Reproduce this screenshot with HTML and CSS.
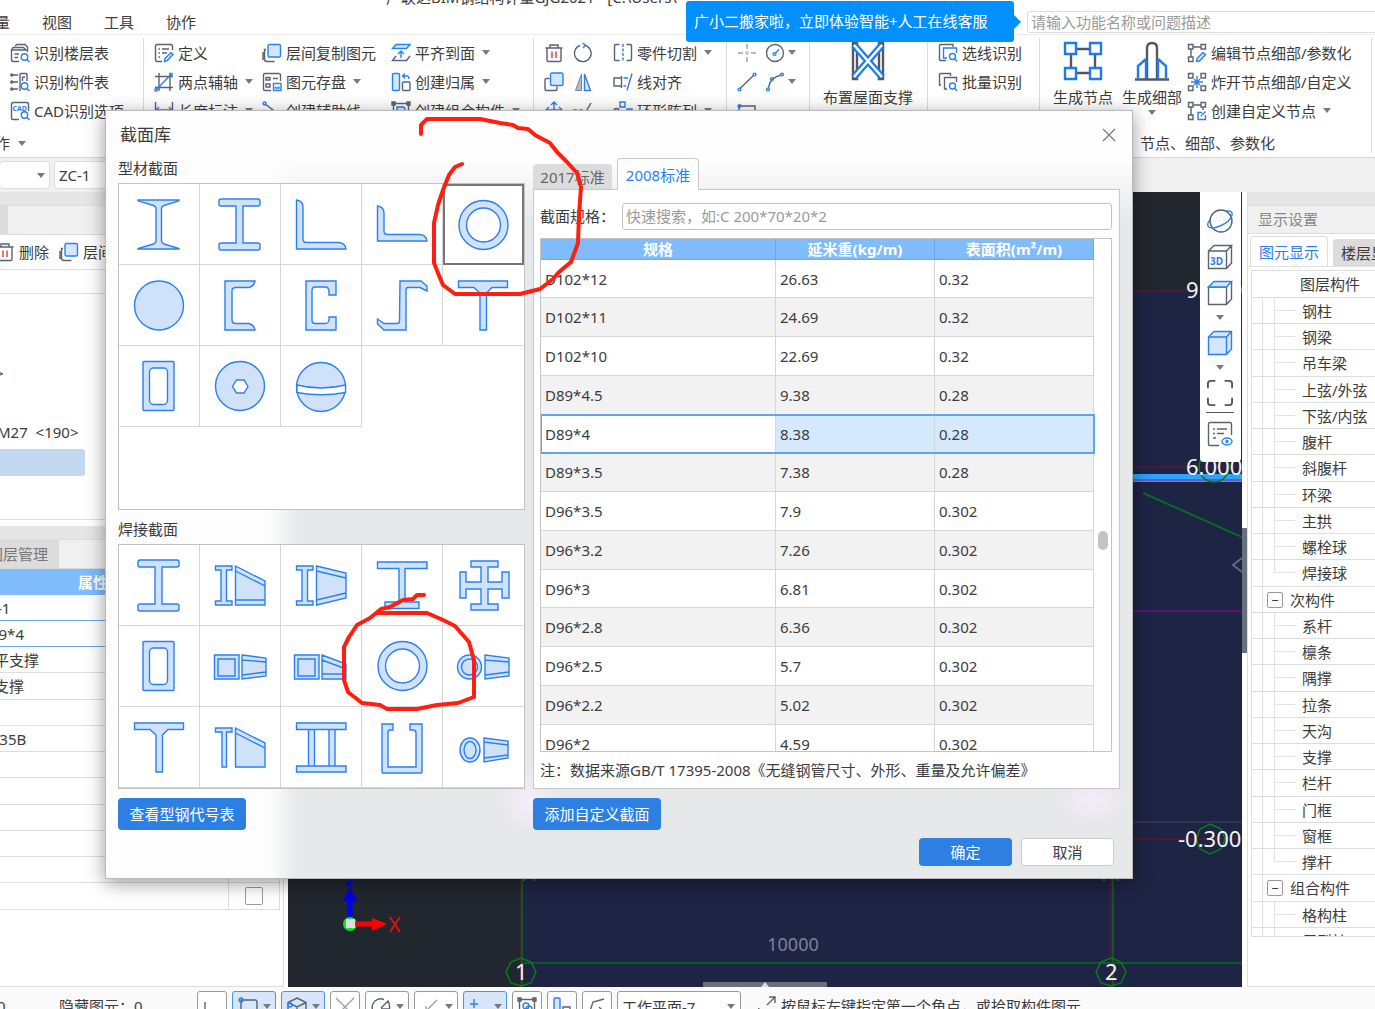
FILE: index.html
```html
<!DOCTYPE html>
<html lang="zh-CN">
<head>
<meta charset="utf-8">
<title>广联达BIM钢结构计量GJG2021</title>
<link rel="stylesheet" href="styles.css">
</head>
<body>
<svg class="defs" aria-hidden="true">
  <symbol id="s-h" viewBox="0 0 80 80"><path d="M21 15H58Q60 15 60 17V20Q60 22 58 22H43V59H58Q60 59 60 61V64Q60 66 58 66H21Q19 66 19 64V61Q19 59 21 59H36V22H21Q19 22 19 20V17Q19 15 21 15Z"/></symbol>
  <symbol id="s-ring" viewBox="0 0 80 80"><circle cx="40.500" cy="40" r="24.500"/><circle class="hole" cx="40.500" cy="40" r="17"/></symbol>
  <symbol id="s-box" viewBox="0 0 80 80"><rect x="24" y="15.500" width="31" height="49" rx="1"/><rect class="hole" x="30.500" y="22" width="18" height="36.500" rx="4"/></symbol>
  <symbol id="s-t" viewBox="0 0 80 80"><path d="M15.500 16H64.500V22.500H49L43.500 28V65H37V28L31 22.500H15.500Z"/></symbol>
  <symbol id="i-copy" viewBox="0 0 20 20"><path class="g" d="M4 6.500H2.500V16Q2.500 18.500 5 18.500H12.500M1 9V17"/><rect class="bf" x="6" y="1.500" width="12.500" height="12.500" rx="1.500"/></symbol>
  <symbol id="i-trash" viewBox="0 0 20 20"><path class="g" d="M1.500 5H18.500M6 5V2H14V5M3 5V17Q3 18.500 4.500 18.500H15.500Q17 18.500 17 17V5"/><path class="r" d="M8 8.500V15M12 8.500V15"/></symbol>
</svg>
<div class="app">
  <header class="titlebar"><span>广联达BIM钢结构计量GJG2021 - [C:\Users\</span></header>
  <nav class="menubar">
    <a href="#">工程量</a><a href="#">视图</a><a href="#">工具</a><a href="#">协作</a>
    <input class="help-search" type="text" aria-label="搜索功能" placeholder="请输入功能名称或问题描述">
    <div class="promo">广小二搬家啦，立即体验智能+人工在线客服</div>
  </nav>

  <section class="ribbon">
    <div class="group g-cad">
      <div class="col">
        <button class="cmd"><svg class="ic" viewBox="0 0 20 20"><path class="g" d="M5 3L7 1.500H15L17.500 4V9M1.500 7L3 4.500H13.500L16 7H1.500V17Q1.500 18.500 3 18.500H9M4.500 11H9M4.500 14.500H8"/><circle class="b" cx="14.500" cy="14" r="3.200"/><path class="b" d="M17 16.500L19.500 19"/></svg>识别楼层表</button>
        <button class="cmd"><svg class="ic" viewBox="0 0 20 20"><path class="g" d="M3 3H8M3 10H8M3 17H8M10 19V2.500Q10 1.500 11 1.500H16Q17 1.500 17 2.500V9M12.500 5H15M12.500 5V9"/><circle class="g" cx="1.800" cy="3" r="1"/><circle class="g" cx="1.800" cy="10" r="1"/><circle class="g" cx="1.800" cy="17" r="1"/><circle class="b" cx="14.500" cy="14" r="3.200"/><path class="b" d="M17 16.500L19.500 19"/></svg>识别构件表</button>
        <button class="cmd"><svg class="ic" viewBox="0 0 20 20"><path class="g" d="M18.500 10V3Q18.500 1.500 17 1.500H3Q1.500 1.500 1.500 3V17Q1.500 18.500 3 18.500H9"/><text class="cadtext" x="2.500" y="9.500">CAD</text><circle class="b" cx="14.500" cy="14" r="3.200"/><path class="b" d="M17 16.500L19.500 19"/></svg>CAD识别选项</button>
      </div>
      <button class="caption cut">操作<i class="caret"></i></button>
    </div>
    <div class="group g-draw">
      <div class="col c1">
        <button class="cmd"><svg class="ic" viewBox="0 0 20 20"><path class="g" d="M18.500 7V3Q18.500 1.500 17 1.500H3Q1.500 1.500 1.500 3V17Q1.500 18.500 3 18.500H8M4.500 6H6M8 6H15M4.500 10H6M8 10H13M4.500 14H6"/><path class="bf" d="M10.500 18.500L11 15.500L17 9.500L19 11.500L13.500 17.500Z"/></svg>定义</button>
        <button class="cmd"><svg class="ic" viewBox="0 0 20 20"><path class="g" d="M1 4.500H19M1 15.500H19M5 1V19M16 1V19"/><path class="b" d="M2.500 17.500L16.500 3"/><circle class="b" cx="2" cy="18" r="1.200"/><circle class="b" cx="17" cy="2.500" r="1.200"/></svg>两点辅轴<i class="caret"></i></button>
        <button class="cmd"><svg class="ic" viewBox="0 0 20 20"><path class="g" d="M1.500 1V19M18.500 1V19"/><path class="b" d="M2 9H18M5 6L2 9L5 12M15 6L18 9L15 12"/></svg>长度标注<i class="caret"></i></button>
      </div>
      <div class="col c2">
        <button class="cmd"><svg class="ic"><use href="#i-copy"/></svg>层间复制图元</button>
        <button class="cmd"><svg class="ic" viewBox="0 0 20 20"><path class="g" d="M18.500 9V3Q18.500 1.500 17 1.500H3Q1.500 1.500 1.500 3V17Q1.500 18.500 3 18.500H9M4 5.500H8V8H4ZM11 6.500H16M4 12H8V15H4Z"/><path class="b" d="M11.500 11.500H19V18.500H11.500ZM13.500 14.500V16H17V14.500"/></svg>图元存盘<i class="caret"></i></button>
        <button class="cmd"><svg class="ic" viewBox="0 0 20 20"><path class="g" d="M3 3L11 9L14 16"/><circle class="b" cx="2.500" cy="2.500" r="1.500"/></svg>创建辅助线</button>
      </div>
      <div class="col">
        <button class="cmd"><svg class="ic" viewBox="0 0 20 20"><path class="bf" d="M5 1.500H19L15.500 5.500H1.500Z"/><path class="b" d="M10 15V8.500M7 11L10 8L13 11"/><path class="g" d="M5 13L1.500 17.500H15.500L19 13"/></svg>平齐到面<i class="caret"></i></button>
        <button class="cmd"><svg class="ic" viewBox="0 0 20 20"><rect class="bf" x="1.500" y="1.500" width="7" height="17" rx="1"/><rect class="g" x="11.500" y="10" width="7.500" height="8.500" rx="1"/><path class="b" d="M12 4H16Q18 4 18 7M14 1.500L11.500 4L14 6.500"/></svg>创建归属<i class="caret"></i></button>
        <button class="cmd"><svg class="ic" viewBox="0 0 20 20"><path class="g" d="M2.500 2.500H17.500V17.500H2.500ZM1 1H4V4H1ZM16 1H19V4H16Z"/><path class="bf" d="M6 14V6H12Q14 6 14 9V14Z"/></svg>创建组合构件<i class="caret"></i></button>
      </div>
    </div>
    <div class="group g-edit">
      <div class="col icons">
        <button class="cmd" aria-label="删除"><svg class="ic"><use href="#i-trash"/></svg></button>
        <button class="cmd" aria-label="复制"><svg class="ic" viewBox="0 0 20 20"><path class="g" d="M5.500 6.500H2.500Q1 6.500 1 8V17Q1 18.500 2.500 18.500H11.500Q13 18.500 13 17V14.500"/><rect class="bf" x="6.500" y="1" width="12.500" height="12.500" rx="1.500"/></svg></button>
        <button class="cmd" aria-label="移动"><svg class="ic" viewBox="0 0 20 20"><path class="b" d="M10 1V12M7 4L10 1L13 4M5 6L2 9L5 12M15 6L18 9L15 12M2 9H18"/></svg></button>
      </div>
      <div class="col icons">
        <button class="cmd" aria-label="旋转"><svg class="ic" viewBox="0 0 20 20"><path class="g" d="M11.500 2.200A8.300 8.300 0 1 1 7 2.500"/><path class="b" d="M9.500 0L12.500 2.200L10 5"/></svg></button>
        <button class="cmd" aria-label="镜像"><svg class="ic" viewBox="0 0 20 20"><path class="gf" d="M8.500 2V18.500H2.500Z"/><path class="bf" d="M11.500 2V18.500H17.500Z"/></svg></button>
        <button class="cmd tight" aria-label="修剪"><svg class="ic" viewBox="0 0 20 20"><path class="b" stroke-dasharray="4 2" d="M0 9H10"/><path class="g" d="M18 2L12 12"/></svg></button>
      </div>
      <div class="col c3">
        <button class="cmd"><svg class="ic" viewBox="0 0 20 20"><path class="g" d="M6.500 1.500H2.500Q1.500 1.500 1.500 2.500V16.500Q1.500 17.500 2.500 17.500H6.500M13.500 1.500H17.500Q18.500 1.500 18.500 2.500V16.500Q18.500 17.500 17.500 17.500H13.500"/><path class="b" stroke-dasharray="3 1.500" d="M10 1V19"/></svg>零件切割<i class="caret"></i></button>
        <button class="cmd"><svg class="ic" viewBox="0 0 20 20"><path class="g" d="M8.500 6H1V14H8.500ZM8.500 4V16"/><path class="b" d="M19 1.500L14 18.500M10.500 6H15M10.500 14H13"/></svg>线对齐</button>
        <button class="cmd"><svg class="ic" viewBox="0 0 20 20"><path class="b" d="M7 1H12V6H7ZM14 8H19V13H14Z"/><circle class="g" cx="3.500" cy="10" r="2.500"/></svg>环形阵列<i class="caret"></i></button>
      </div>
    </div>
    <div class="group g-line">
      <div class="col icons">
        <button class="cmd" aria-label="点"><svg class="ic dim" viewBox="0 0 20 20"><path class="g" d="M10 1V6M10 14V19M1 10H6M14 10H19"/><circle cx="10" cy="10" r="2" fill="#aaa"/></svg></button>
        <button class="cmd" aria-label="直线"><svg class="ic" viewBox="0 0 20 20"><path class="g" d="M3 16.500L16.500 3.500"/><circle class="b" cx="2.500" cy="17.500" r="1.400"/><circle class="b" cx="17.500" cy="2.500" r="1.400"/></svg></button>
        <button class="cmd" aria-label="矩形"><svg class="ic" viewBox="0 0 20 20"><path class="g" d="M2 18V5H18V18"/><circle class="b" cx="2.500" cy="5" r="1.400"/></svg></button>
      </div>
      <div class="col">
        <button class="cmd tight" aria-label="圆"><svg class="ic" viewBox="0 0 20 20"><circle class="g" cx="9" cy="10" r="8.500"/><circle class="b" cx="8.500" cy="11" r="1.400"/><path class="b" d="M9.500 10L13 6.500"/></svg><i class="caret"></i></button>
        <button class="cmd tight" aria-label="弧"><svg class="ic" viewBox="0 0 20 20"><path class="g" d="M2.500 16Q4 5 15.500 3"/><circle class="b" cx="2" cy="17.500" r="1.400"/><circle class="b" cx="6" cy="7" r="1.400"/><circle class="b" cx="16" cy="2.500" r="1.400"/></svg><i class="caret"></i></button>
      </div>
    </div>
    <div class="group g-roof">
      <button class="big"><svg viewBox="0 0 40 40"><path class="g2" d="M5 2H9V38H5ZM31 2H35V38H31Z"/><path d="M6 4L34 36M34 4L6 36" stroke="#1f7aec" stroke-width="7"/><path d="M6 4L34 36M34 4L6 36" stroke="#fff" stroke-width="2.500"/></svg>布置屋面支撑</button>
    </div>
    <div class="group g-rec">
      <div class="col">
        <button class="cmd"><svg class="ic" viewBox="0 0 20 20"><path class="g" d="M15 4V1.500H2.500Q1.500 1.500 1.500 2.500V16.500Q1.500 17.500 2.500 17.500H8"/><path class="b" d="M9 15H5.500V5H18.500V10"/><circle class="b" cx="14.500" cy="13.500" r="3"/><path class="b" d="M17 16L19 18.500"/></svg>选线识别</button>
        <button class="cmd"><svg class="ic" viewBox="0 0 20 20"><path class="g" d="M3 13H1.500V2.500Q1.500 1.500 2.500 1.500H12.500V4M9 17H6.500V5.500H18.500V10"/><circle class="b" cx="14.500" cy="14" r="3"/><path class="b" d="M17 16.500L19 19"/></svg>批量识别</button>
      </div>
    </div>
    <div class="group g-node">
      <div class="cols">
        <button class="big"><svg viewBox="0 0 40 40"><path class="g2" d="M8 8H32V32H8Z"/><path class="b2" d="M2 2H13V13H2ZM27 2H38V13H27ZM2 27H13V38H2ZM27 27H38V38H27Z"/></svg>生成节点</button>
        <button class="big"><svg viewBox="0 0 40 40"><path class="g2" d="M15 38V7Q15 2 20 2Q25 2 25 7V38M3 38.500H37"/><path class="b2" d="M6 37V25L14 18M34 37V25L26 18M14 18V37M26 18V37"/></svg>生成细部<i class="caret"></i></button>
        <div class="col">
          <button class="cmd"><svg class="ic" viewBox="0 0 20 20"><path class="g" d="M1.500 1.500H6V6H1.500ZM14 1.500H18.500V6H14ZM1.500 14H6V18.500H1.500ZM6 4H14M4 6V14"/><path class="bf" d="M9.500 18.500L10 15.500L16 9.500L18.500 11.500L12.500 18Z"/></svg>编辑节点细部/参数化</button>
          <button class="cmd"><svg class="ic" viewBox="0 0 20 20"><path class="g" d="M6 1.500H1.500V6H6ZM14 1.500H18.500V6H14ZM1.500 14H6V18.500H1.500ZM14 14H18.500V18.500H14Z"/><path class="b" d="M10 4V16M4 10H16M7 7L13 13M13 7L7 13"/></svg>炸开节点细部/自定义</button>
          <button class="cmd"><svg class="ic" viewBox="0 0 20 20"><path class="g" d="M1.500 1.500H6V6H1.500ZM14 1.500H18.500V6H14ZM1.500 14H6V18.500H1.500ZM6 4H14M4 6V14M16 6V9"/><path class="b" d="M15 11.500H11V18.500H18.500V14M14 15L18.500 10.500"/></svg>创建自定义节点<i class="caret"></i></button>
        </div>
      </div>
      <div class="caption">节点、细部、参数化</div>
    </div>
  </section>

  <section class="filterbar">
    <button class="combo first" aria-label="楼层"><i class="caret"></i></button>
    <button class="combo">ZC-1</button>
  </section>

  <main class="work">
    <aside class="left">
      <section class="pane pane-list">
        <div class="strip"></div>
        <div class="tabrow"><span class="tab stub"></span></div>
        <div class="tools"><button class="cmd"><svg class="ic"><use href="#i-trash"/></svg>删除</button><button class="cmd"><svg class="ic"><use href="#i-copy"/></svg>层间复制</button></div>
        <div class="find"></div>
        <ul class="parts"><li class="code">&gt;</li><li></li><li class="code bolt">M27&nbsp; &lt;190&gt;</li><li class="sel"></li></ul>
      </section>
      <section class="pane pane-props">
        <div class="strip"></div>
        <div class="tabrow"><span class="tab">图层管理</span></div>
        <table class="props">
          <colgroup><col><col class="ck"></colgroup>
          <thead><tr><th>属性值</th><th></th></tr></thead>
          <tbody>
            <tr class="hl"><td>ZC-1</td><td></td></tr>
            <tr class="hl"><td>D89*4</td><td></td></tr>
            <tr><td>水平支撑</td><td></td></tr>
            <tr><td>钢支撑</td><td></td></tr>
            <tr><td></td><td></td></tr>
            <tr><td>Q235B</td><td></td></tr>
            <tr><td></td><td></td></tr>
            <tr><td></td><td></td></tr>
            <tr><td></td><td></td></tr>
            <tr><td></td><td></td></tr>
            <tr><td></td><td><input type="checkbox" aria-label="附加"></td></tr>
            <tr><td></td><td><input type="checkbox" aria-label="附加"></td></tr>
          </tbody>
        </table>
      </section>
    </aside>

    <section class="canvas">
      <svg class="scene" fill="none">
        <rect width="100%" height="100%" fill="#20272e"/>
        <rect x="234" y="99" width="800" height="800" fill="#1e2444"/>
        <path d="M800 99H954M800 275H954M800 647H954" stroke="#7d1026"/>
        <path d="M800 419H954" stroke="#5a1278" stroke-width="2"/>
        <path d="M800 630H954" stroke="#41465e"/>
        <path d="M800 284.500H954" stroke="#2ea3ff" stroke-width="5"/>
        <path d="M800 288H954" stroke="#5a5fd0" stroke-width="2"/>
        <path d="M800 289.500H954" stroke="#35a0e8"/>
        <path d="M855 301L954 345" stroke="#0a6a25" stroke-width="2"/>
        <path d="M954 366L945 373L954 380" stroke="#63678a" stroke-width="2"/>
        <path d="M233 600V795M823 600V795" stroke="#7d1026"/>
        <path d="M234 600V795M825 600V795M234 771H954" stroke="#0c5a28" stroke-width="2"/>
        <path d="M236 686V689M246 686V689M816 686V689M830 686V689" stroke="#8a8ea8"/>
        <g stroke="#0b7a1d" stroke-width="1.500">
          <path d="M233 766L243 770L248 780L243 791L233 794L223 791L218 780L223 770Z"/>
          <path d="M823 766L833 770L838 780L833 791L823 794L813 791L808 780L813 770Z"/>
          <path d="M922 632L933 637L937 647L933 657L922 662L912 657L908 647L912 637Z"/>
          <circle cx="926" cy="275" r="15"/>
        </g>
        <g class="level"><text x="898" y="106">9.000</text><text x="898" y="283">6.000</text><text x="890" y="655">-0.300</text><text x="227" y="788">1</text><text x="817" y="788">2</text></g>
        <text class="dim-text" x="505" y="759" text-anchor="middle">10000</text>
        <path d="M62 728V708" stroke="#00f" stroke-width="5"/><path d="M55 709H69L62 695Z" fill="#0000e0"/>
        <path d="M58 693H66M59 693L67 684" stroke="#00f" stroke-width="2"/>
        <circle cx="62" cy="732" r="7" fill="#0de32a"/>
        <path d="M66 732H84" stroke="#f00" stroke-width="5"/><path d="M84 726V739L99 732Z" fill="#f00"/>
        <path d="M102 725L112 740M112 725L102 740" stroke="#e01010" stroke-width="2"/>
        <rect x="58" y="727" width="9" height="9" fill="#ddd"/>
        <path d="M415 790H539V795H415Z" fill="#66717c"/><path d="M473 795L477 790L481 795Z" fill="#ddd"/>
      </svg>
      <div class="viewbar">
        <button aria-label="旋转视图"><svg viewBox="0 0 26 26"><circle class="g" cx="14" cy="13" r="11"/><path class="b" d="M19 3Q26 2 25 7Q23 14 13 18Q3 22 1 18Q0 15 3 12"/></svg></button>
        <button aria-label="三维"><svg viewBox="0 0 26 26"><path class="g" d="M1.500 7H19.500V24.500H1.500ZM1.500 7L7 1.500H24.500L19.500 7M24.500 1.500V19L19.500 24.500"/><text class="t3d" x="3" y="21">3D</text></svg></button>
        <button aria-label="俯视"><svg viewBox="0 0 26 26"><path class="g" d="M1.500 7H19.500V24.500H1.500ZM24.500 1.500V19L19.500 24.500"/><path class="bf" d="M1.500 7L7 1.500H24.500L19.500 7Z"/></svg></button>
        <i class="caret"></i>
        <button aria-label="着色"><svg viewBox="0 0 26 26"><path class="bf" d="M1.500 7L7 1.500H24.500V19L19.500 24.500H1.500ZM1.500 7H19.500V24.500M19.500 7L24.500 1.500"/></svg></button>
        <i class="caret"></i>
        <button aria-label="全屏"><svg viewBox="0 0 28 28"><path class="g2 thin" d="M1 9V4Q1 1 4 1H9M19 1H24Q27 1 27 4V9M27 19V24Q27 27 24 27H19M9 27H4Q1 27 1 24V19"/></svg></button>
        <hr>
        <button aria-label="显示列表"><svg viewBox="0 0 26 26"><path class="g" d="M24.500 14V3Q24.500 1.500 23 1.500H3Q1.500 1.500 1.500 3V23Q1.500 24.500 3 24.500H12M6 8H8M10 8H20M6 12.500H8M10 12.500H17M6 17H9"/><ellipse class="b" cx="20" cy="20.500" rx="5" ry="3.500"/><circle class="b" cx="20" cy="20.500" r="1"/></svg></button>
      </div>
    </section>
    <div class="splitter"><span class="grip"></span></div>

    <aside class="right">
      <div class="strip"></div>
      <h2>显示设置</h2>
      <div class="rtabs"><button class="on">图元显示</button><button>楼层显示</button></div>
      <ul class="tree">
        <li class="head">图层构件</li>
        <li>钢柱</li><li>钢梁</li><li>吊车梁</li><li>上弦/外弦</li><li>下弦/内弦</li><li>腹杆</li><li>斜腹杆</li><li>环梁</li><li>主拱</li><li>螺栓球</li><li class="last">焊接球</li>
        <li class="branch"><button aria-label="折叠">−</button>次构件</li>
        <li>系杆</li><li>檩条</li><li>隅撑</li><li>拉条</li><li>天沟</li><li>支撑</li><li>栏杆</li><li>门框</li><li>窗框</li><li class="last">撑杆</li>
        <li class="branch"><button aria-label="折叠">−</button>组合构件</li>
        <li>格构柱</li><li>巨型柱</li>
      </ul>
    </aside>
  </main>

  <footer class="status">
    <span class="s0">0</span><span class="s1">隐藏图元：0</span>
    <button class="sb" aria-label="正交"><svg class="ic" viewBox="0 0 20 20"><path class="g" d="M3 5V18H16M3 13H8V18"/></svg></button>
    <button class="sb on wide" aria-label="捕捉"><svg class="ic" viewBox="0 0 20 20"><path class="g" d="M3 3H17Q19 3 19 5V19H3Z"/><circle class="b" cx="3" cy="3" r="2"/></svg><i class="caret"></i></button>
    <button class="sb on wide" aria-label="三维捕捉"><svg class="ic" viewBox="0 0 20 20"><path class="g" d="M10 1L19 5.500V15L10 19.500L1 15V5.500ZM1 5.500L10 10L19 5.500M10 10V19"/><circle class="b" cx="3" cy="8" r="2"/></svg><i class="caret"></i></button>
    <button class="sb" aria-label="交点"><svg class="ic dim" viewBox="0 0 20 20"><path class="g" d="M1 1L19 19M19 1L1 19"/></svg></button>
    <button class="sb wide" aria-label="角度"><svg class="ic" viewBox="0 0 20 20"><path class="g" d="M18 12A8.500 8.500 0 1 1 13 2.500M10 11L17 4Q19 7 18.500 12H10"/></svg><i class="caret"></i></button>
    <button class="sb wide" aria-label="偏移"><svg class="ic dim" viewBox="0 0 20 20"><path class="g" d="M17 3L6 14M6 9V14H11"/></svg><i class="caret"></i></button>
    <button class="sb on wide" aria-label="坐标"><svg class="ic" viewBox="0 0 20 20"><path class="b" d="M5 2V11M1 7H9M10 13H20"/></svg><i class="caret"></i></button>
    <button class="sb" aria-label="选择"><svg class="ic" viewBox="0 0 20 20"><path class="g" d="M2.500 2.500H17.500V17.500H2.500ZM1 1H4V4H1ZM16 1H19V4H16Z"/><circle class="b" cx="9" cy="9" r="3"/><circle class="b" cx="12" cy="12" r="3"/></svg></button>
    <button class="sb" aria-label="对齐"><svg class="ic" viewBox="0 0 20 20"><rect class="bf" x="2" y="1" width="6" height="18" rx="1"/><path class="g" d="M11 10H18V19H11Z"/></svg></button>
    <button class="sb" aria-label="多段线"><svg class="ic" viewBox="0 0 20 20"><path class="g" d="M2 17L6 5L17 2M12 10L18 16"/></svg></button>
    <div class="plane"><select aria-label="工作平面"><option>工作平面-7</option></select><i class="caret"></i></div>
    <svg class="ic hint" viewBox="0 0 20 20"><path class="g" d="M13 2H19V8M19 2L11 10M3 13L1 19H7"/></svg>
    <span>按鼠标左键指定第一个角点，或拾取构件图元</span>
  </footer>
</div>

<section class="dialog" role="dialog" aria-labelledby="dlg-title">
  <header><h1 id="dlg-title">截面库</h1><button class="close" aria-label="关闭"><svg viewBox="0 0 14 14"><path d="M1 1L13 13M13 1L1 13" stroke="#777" stroke-width="1.200"/></svg></button></header>
  <div class="dlg-body">
    <div class="sections">
      <h3>型材截面</h3>
      <div class="grid grid-a">
        <button aria-label="工字钢"><svg viewBox="0 0 80 80"><path d="M19 16H60V16.800L45 21.500Q42.500 22.500 42.500 24V57Q42.500 59 45 60L60 64.500V65H19V64.500L34.500 60Q37 59 37 57V24Q37 22.500 34.500 21.500L19 16.800Z"/></svg></button>
        <button aria-label="H型钢"><svg><use href="#s-h"/></svg></button>
        <button aria-label="等边角钢"><svg viewBox="0 0 80 80"><path d="M15.500 16Q22 17 22 23V55Q22 58.500 25.500 58.500H58Q64 59 65 65H15.500Z"/></svg></button>
        <button aria-label="不等边角钢"><svg viewBox="0 0 80 80"><path d="M15.500 22Q22 23 22 29V47Q22 50.500 25.500 50.500H58Q64 51 65 57H15.500Z"/></svg></button>
        <button class="picked" aria-label="圆管"><svg><use href="#s-ring"/></svg></button>
        <button aria-label="圆钢"><svg viewBox="0 0 80 80"><circle cx="40" cy="40.500" r="24.500"/></svg></button>
        <button aria-label="槽钢"><svg viewBox="0 0 80 80"><path d="M25 16H55Q54 21 49 22.500H36Q32 22.500 32 26V55Q32 58.500 36 58.500H49Q54 60 55 65H25Z"/></svg></button>
        <button aria-label="C型钢"><svg viewBox="0 0 80 80"><path d="M25 16H55V30H48V26Q47.500 22 44 22H34Q31 22 31 26V55Q31 58.500 34 58.500H44Q47.500 58.500 48 55V52H55V65H25Z"/></svg></button>
        <button aria-label="Z型钢"><svg viewBox="0 0 80 80"><path d="M38 16H59L65 21V26L58 22.500H46Q44 22.500 44 25V65H22L15.500 59V54L22 58.500H35Q37.500 58.500 37.500 56Z"/></svg></button>
        <button aria-label="T型钢"><svg><use href="#s-t"/></svg></button>
        <button aria-label="方管"><svg><use href="#s-box"/></svg></button>
        <button aria-label="螺栓球"><svg viewBox="0 0 80 80"><circle cx="40" cy="40" r="24.500"/><path class="hole" d="M32.500 40.500L36.500 34H44L48 40.500L44 47H36.500Z"/></svg></button>
        <button aria-label="焊接球"><svg viewBox="0 0 80 80"><circle cx="40" cy="41" r="24.500"/><path class="hole" d="M16 39Q40 45 64.500 39V46.500Q40 51 16 46.500Z"/></svg></button>
      </div>
      <h3 class="second">焊接截面</h3>
      <div class="grid">
        <button aria-label="焊接H"><svg><use href="#s-h"/></svg></button>
        <button aria-label="变截面H"><svg viewBox="0 0 80 80"><path d="M15.500 21H32V25H26.500V56H32V60H15.500V56H21V25H15.500ZM35.500 21L65 36V60H35.500ZM35.500 26L65 41M35.500 55H65"/></svg></button>
        <button aria-label="双变截面H"><svg viewBox="0 0 80 80"><path d="M15.500 21H32V25H26.500V56H32V60H15.500V56H21V25H15.500ZM35.500 21L65 28V53L35.500 60ZM35.500 26L65 33M35.500 55L65 48"/></svg></button>
        <button aria-label="不等翼缘H"><svg viewBox="0 0 80 80"><path d="M15.500 17H65V23.500H43V57H57V63.500H23V57H37V23.500H15.500Z"/></svg></button>
        <button aria-label="十字"><svg viewBox="0 0 80 80"><path d="M28 16H55V22H45V37H59V27H66V53H59V44H45V59H55V65H28V59H38V44H23V53H17V27H23V37H38V22H28Z"/></svg></button>
        <button aria-label="箱型"><svg><use href="#s-box"/></svg></button>
        <button aria-label="变截面箱型"><svg viewBox="0 0 80 80"><path d="M14.500 29H39V53H14.500ZM18 33H35V50H18ZM42 29L66 32V50L42 53ZM42 34L66 36M42 49L66 46"/></svg></button>
        <button aria-label="单侧变截面箱型"><svg viewBox="0 0 80 80"><path d="M13.500 29H38V53H13.500ZM17 33H34V50H17ZM41 29L65 38V53H41ZM41 34L65 43M41 48H65"/></svg></button>
        <button aria-label="焊接圆管"><svg><use href="#s-ring"/></svg></button>
        <button aria-label="锥管"><svg viewBox="0 0 80 80"><circle cx="26.500" cy="41" r="12"/><circle cx="26.500" cy="41" r="8"/><path d="M42 29L66 32V50L42 53ZM42 34L66 36M42 49L66 46"/></svg></button>
        <button aria-label="焊接T"><svg><use href="#s-t"/></svg></button>
        <button aria-label="变截面T"><svg viewBox="0 0 80 80"><path d="M15.500 21H32V25H26.500V60H22V25H15.500ZM35.500 21L65 36V60H35.500ZM35.500 26L65 41"/></svg></button>
        <button aria-label="双腹板"><svg viewBox="0 0 80 80"><path d="M15.500 16H65V22.500H15.500ZM15.500 59H65V65H15.500ZM27.500 22.500H33.500V59H27.500ZM48 22.500H54V59H48Z"/></svg></button>
        <button aria-label="U型"><svg viewBox="0 0 80 80"><path d="M20 17H31V23H28Q26 23 26 26V60H54V26Q54 23 51 23H48V17H60V65Q60 66 59 66H21Q20 66 20 65Z"/></svg></button>
        <button aria-label="椭圆锥管"><svg viewBox="0 0 80 80"><ellipse cx="27" cy="43" rx="10" ry="12"/><ellipse cx="27" cy="43" rx="6" ry="8.500"/><path d="M41 31L65 34V51L41 55ZM41 35L65 38M41 51L65 48"/></svg></button>
      </div>
      <button class="primary">查看型钢代号表</button>
    </div>

    <div class="specs">
      <div class="tabs"><button>2017标准</button><button class="on">2008标准</button></div>
      <div class="panel">
        <div class="field"><label for="spec">截面规格：</label><input id="spec" type="text" placeholder="快速搜索，如:C 200*70*20*2"></div>
        <div class="tablebox">
          <table class="data">
            <colgroup><col class="k1"><col class="k2"><col></colgroup>
            <thead><tr><th>规格</th><th>延米重(kg/m)</th><th>表面积(m²/m)</th></tr></thead>
            <tbody>
              <tr><td>D102*12</td><td>26.63</td><td>0.32</td></tr>
              <tr><td>D102*11</td><td>24.69</td><td>0.32</td></tr>
              <tr><td>D102*10</td><td>22.69</td><td>0.32</td></tr>
              <tr><td>D89*4.5</td><td>9.38</td><td>0.28</td></tr>
              <tr class="sel"><td>D89*4</td><td>8.38</td><td>0.28</td></tr>
              <tr><td>D89*3.5</td><td>7.38</td><td>0.28</td></tr>
              <tr><td>D96*3.5</td><td>7.9</td><td>0.302</td></tr>
              <tr><td>D96*3.2</td><td>7.26</td><td>0.302</td></tr>
              <tr><td>D96*3</td><td>6.81</td><td>0.302</td></tr>
              <tr><td>D96*2.8</td><td>6.36</td><td>0.302</td></tr>
              <tr><td>D96*2.5</td><td>5.7</td><td>0.302</td></tr>
              <tr><td>D96*2.2</td><td>5.02</td><td>0.302</td></tr>
              <tr><td>D96*2</td><td>4.59</td><td>0.302</td></tr>
            </tbody>
          </table>
          <div class="scroll"><span></span></div>
        </div>
        <p class="note">注：数据来源GB/T 17395-2008《无缝钢管尺寸、外形、重量及允许偏差》</p>
      </div>
      <button class="primary">添加自定义截面</button>
    </div>
  </div>
  <footer><button class="primary">确定</button><button class="plain">取消</button></footer>
  <svg class="ink" aria-hidden="true"><path d="M421 134V125L427 119H480L500 123L513 125L518 128L528 129L535 135L550 143L557 152L567 162L577 173L581 187L579 215L578 243L571 262L559 272L553 279L540 289L520 294L513 294H455L443 285L438 273L434 263V223L438 205L443 190L449 175L455 167L462 164"/><path d="M424 595H417L413 599L403 600L390 607L381 609L370 618L357 625L349 637L344 647V680L348 692L362 703L380 705L387 709H417L437 705L458 703L474 697V660L469 642L455 626L443 620L427 613H377"/></svg>
</section>
</body>
</html>
```
FILE: styles.css
```css
* { box-sizing: border-box; }
body { margin: 0; background: #fff; color: #3c3c3c; font: 15px/20px "Noto Sans", "Noto Sans CJK SC", sans-serif; overflow: hidden; position: relative; height: 100vh; }
button, input, select { font: inherit; color: inherit; margin: 0; }
button { background: none; border: 0; padding: 0; white-space: nowrap; }
h1, h2, h3, p, ul { margin: 0; padding: 0; font-weight: normal; list-style: none; }
a { color: inherit; text-decoration: none; }
svg { fill: none; display: block; flex: none; }
.defs { position: absolute; width: 0; height: 0; }
.g { stroke: #5b6273; stroke-width: 1.4; fill: none; }
.b { stroke: #2b80ee; stroke-width: 1.4; fill: none; }
.bf { stroke: #2b80ee; stroke-width: 1.4; fill: #d4e6fb; }
.gf { stroke: #7d8494; stroke-width: 1; fill: #b4b9c4; }
.r { stroke: #e0525a; stroke-width: 1.6; }
.g2 { stroke: #515767; stroke-width: 2.4; }
.g2.thin { stroke-width: 2; }
.b2 { stroke: #1f7aec; stroke-width: 2.4; fill: #fff; }
.dim { opacity: .6; }
.ic { width: 20px; height: 20px; }
.caret { width: 0; height: 0; border: 4px solid transparent; border-top: 5px solid #7a7a7a; border-bottom: 0; flex: none; }

.app { height: 100vh; display: flex; flex-direction: column; overflow: hidden; }
.titlebar { flex: none; height: 7px; overflow: hidden; display: flex; align-items: flex-end; padding-left: 386px; }
.menubar { flex: none; height: 28px; display: flex; align-items: center; gap: 32px; margin-left: -35px; padding-top: 3px; border-bottom: 1px solid #ececec; position: relative; white-space: nowrap; }
.help-search { margin-left: auto; width: 352px; flex: none; height: 22px; border: 1px solid #ddd; border-radius: 3px; padding: 0 3px; margin-right: -4px; background: #fff; }
::placeholder { color: #9a9a9a; opacity: 1; }
.promo { position: absolute; right: 361px; top: -6px; width: 328px; height: 41px; padding: 0 8px; line-height: 41px; background: #0390ff; color: #fff; border-radius: 3px; z-index: 2; }
.promo::after { content: ""; position: absolute; left: 100%; top: 14px; border: 7px solid transparent; border-left-color: #0390ff; border-right: 0; }

.ribbon { flex: none; height: 123px; display: flex; border-bottom: 1px solid #d6d6d6; overflow: hidden; }
.group { position: relative; flex: none; display: flex; padding: 3px 0 0 10px; }
.group::after { content: ""; position: absolute; right: 0; top: 3px; bottom: 4px; width: 1px; background: #dcdcdc; }
.col { display: flex; flex-direction: column; }
.cmd { height: 29px; display: flex; align-items: center; gap: 4px; }
.cmd .caret { margin-left: 3px; }
.caption { height: 22px; display: flex; align-items: center; gap: 8px; }
.g-cad, .g-node { flex-direction: column; }
.g-cad .caption, .g-node .caption { margin-top: 7px; }
.cut { margin-left: -30px; }
.g-cad { width: 144px; }
.g-draw { width: 390px; }
.c1 { width: 108px; }
.c2 { width: 129px; }
.g-edit { width: 193px; }
.icons { width: 29px; }
.c3 { margin-left: 11px; }
.g-line { width: 83px; }
.tight { gap: 0; }
.tight .caret { margin-left: 2px; }
.cadtext { font-size: 7px; font-weight: 700; fill: #2b80ee; }
.g-roof { width: 118px; padding-left: 13px; }
.big { display: flex; flex-direction: column; align-items: center; height: 87px; padding-top: 3px; line-height: 20px; gap: 6px; }
.big svg { width: 40px; height: 40px; }
.big .caret { margin-top: -3px; }
.g-rec { width: 112px; }
.g-node { width: 332px; padding-left: 13px; }
.g-node .cols { display: flex; gap: 9px; }
.g-node .col { margin-left: -4px; }
.g-node .caption { padding-left: 87px; }

.filterbar { flex: none; height: 34px; background: #f0f0f0; display: flex; gap: 4px; padding: 3px 0; }
.combo { width: 120px; height: 28px; background: #fff; border: 1px solid #ddd; border-radius: 4px; text-align: left; padding: 0 4px; display: flex; align-items: center; }
.combo.first { width: 51px; margin-left: -1px; justify-content: flex-end; }

.work { flex: 1; min-height: 0; display: flex; background: #fff; }
.left { width: 288px; flex: none; display: flex; flex-direction: column; gap: 6px; overflow: hidden; }
.pane { width: 284px; border-right: 1px solid #ddd; border-bottom: 1px solid #ddd; overflow: hidden; }
.pane-list { height: 328px; flex: none; }
.pane-props { flex: 1; }
.strip { height: 14px; background: #e6e6e6; border-bottom: 1px solid #ddd; }
.tabrow { height: 29px; background: #f0f0f0; display: flex; border-bottom: 1px solid #dcdcdc; }
.tab { background: #dcdcdc; color: #777; padding: 0 11px; line-height: 28px; margin-left: -23px; }
.stub { width: 8px; margin: 0; padding: 0; }
.tools { height: 35px; border-bottom: 1px solid #ddd; display: flex; align-items: center; gap: 10px; margin-left: -5px; }
.tools .cmd { white-space: nowrap; }
.find { height: 24px; border-bottom: 1px solid #ddd; }
.parts { padding-top: 66px; }
.parts li { height: 27px; line-height: 27px; }
.parts .code { margin-left: -5px; }
.parts .bolt { margin: 5px 0 3px -3px; }
.parts .sel { background: #c2d8f0; width: 85px; border-radius: 0 3px 3px 0; }
.props { width: 308px; margin-left: -28px; border-spacing: 0; table-layout: fixed; }
.props .ck { width: 51px; }
.props th { background: #80bbfb; color: #fff; height: 26px; padding: 0; }
.props td { height: 26px; padding: 0 7px; border-bottom: 1px solid #ddd; border-right: 1px solid #ddd; }
.props tr:nth-child(4n) td { height: 27px; }
.props .hl td { border-bottom-color: #6aa7ea; }
.props td:nth-child(2) { text-align: center; }
.props input { appearance: none; width: 18px; height: 18px; border: 1px solid #999; border-radius: 2px; display: block; margin: auto; }

.canvas { flex: 1; min-width: 0; position: relative; overflow: hidden; background: #20272e; }
.scene { width: 100%; height: 100%; }
.level text { fill: #f4f4f4; stroke: none; font-size: 22px; }
.dim-text { fill: #7d809c; font-size: 18px; }
.viewbar { position: absolute; right: 1px; top: 0; width: 41px; padding: 15px 2px 15px 0; display: flex; flex-direction: column; align-items: center; gap: 9px; background: #fff; border-radius: 0 0 4px 4px; }
.viewbar button { height: 27px; }
.viewbar svg { width: 26px; height: 26px; }
.viewbar hr { width: 28px; margin: -3px 0 -2px; border: 0; border-top: 1px solid #555; }
.t3d { font-size: 10px; font-weight: 700; fill: #2b80ee; }
.splitter { width: 5px; flex: none; padding-top: 336px; }
.grip { display: block; height: 125px; background: #66717c; }

.right { width: 128px; flex: none; border-left: 1px solid #ddd; border-bottom: 1px solid #ddd; overflow: hidden; display: flex; flex-direction: column; }
.right h2 { height: 28px; background: #f0f0f0; border-bottom: 1px solid #ddd; font-size: 15px; line-height: 27px; padding-left: 10px; color: #888; flex: none; }
.right .strip { flex: none; }
.rtabs { display: flex; gap: 5px; align-items: flex-end; height: 33px; padding-left: 2px; border-bottom: 1px solid #e2e2e2; flex: none; }
.rtabs button { height: 27px; padding: 0 8px; background: #dcdcdc; border-radius: 4px 4px 0 0; }
.rtabs .on { height: 30px; background: #fff; border: 1px solid #ddd; border-bottom: 0; color: #2b80ee; }
.tree { margin: 3px 0 49px 3px; flex: 1; min-height: 0; overflow: hidden; border: 1px solid #ddd; border-right: 0; white-space: nowrap; }
.tree li { position: relative; height: 26px; line-height: 26px; padding-left: 50px; border-bottom: 1px solid #ddd; background: linear-gradient(#e2e2e2, #e2e2e2) 10px 0 / 1px 100% no-repeat, linear-gradient(#e2e2e2, #e2e2e2) 22px 0 / 1px 100% no-repeat, linear-gradient(#e2e2e2, #e2e2e2) 22px 12px / 21px 1px no-repeat; }
.tree li:nth-child(4n) { height: 27px; }
.tree .head { background: none; height: 27px; padding-left: 48px; }
.tree .last { background-size: 1px 100%, 1px 12px, 21px 1px; }
.tree .branch { padding-left: 15px; display: flex; align-items: center; gap: 7px; background: linear-gradient(#e2e2e2, #e2e2e2) 10px 0 / 1px 100% no-repeat; }
.tree .branch button { width: 16px; height: 16px; border: 1px solid #999; border-radius: 2px; background: #fff; line-height: 12px; font-size: 13px; }

.status { flex: none; height: 22px; overflow: hidden; background: #fafafa; display: flex; align-items: flex-start; gap: 5px; padding-top: 4px; line-height: 30px; white-space: nowrap; }
.s0 { width: 54px; margin-left: -3px; }
.s1 { width: 133px; margin-left: 3px; }
.sb { width: 30px; height: 30px; border: 1px solid #999; border-radius: 3px; background: #fff; display: flex; align-items: center; justify-content: center; gap: 5px; flex: none; }
.sb.wide { width: 44px; }
.sb.on { background: #d7e6fb; border-color: #4a93ee; }
.sb .ic { margin-top: 2px; }
.plane { width: 124px; height: 30px; border: 1px solid #999; border-radius: 3px; background: #fff; padding-right: 5px; flex: none; display: flex; align-items: center; }
.plane select { appearance: none; flex: 1; min-width: 0; border: 0; background: none; padding: 0 4px; height: 28px; }
.hint { margin: 4px 0 0 10px; }

.dialog { position: absolute; left: 105px; right: 242px; top: 110px; bottom: 130px; display: flex; flex-direction: column; border: 1px solid #b9b9b9; padding: 0 12px 12px; box-shadow: 0 4px 18px rgba(0, 0, 0, .4);
  background: radial-gradient(ellipse at 986px 690px, #f5ebfb 0, transparent 34px), radial-gradient(ellipse at 423px 690px, #f5edfb 0, transparent 30px), linear-gradient(#fdfdfd 50px, rgba(253, 253, 253, 0) 110px), linear-gradient(90deg, #fdfdfd 163px, #e7e8ea 192px); }
.dialog > header { height: 47px; flex: none; display: flex; justify-content: space-between; align-items: center; padding: 0 4px 0 2px; }
.dialog h1 { font-size: 17px; line-height: 24px; }
.close svg { width: 14px; height: 14px; }
.dlg-body { flex: 1; min-height: 0; display: grid; grid-template-columns: 407px minmax(0, 1fr); gap: 8px; }
.sections, .specs { display: flex; flex-direction: column; min-height: 0; }
.dialog h3 { font-size: 15px; height: 25px; line-height: 20px; flex: none; }
.dialog h3.second { height: 34px; padding-top: 9px; }
.grid { display: grid; grid-template-columns: repeat(5, 1fr); grid-auto-rows: 81px; background: #fff; border: 1px solid #c2c2c2; flex: none; }
.grid-a { flex: 1; align-content: start; }
.grid button { border-right: 1px solid #d6d6d6; border-bottom: 1px solid #d6d6d6; }
.grid button:nth-child(5n) { border-right-color: transparent; }
.grid button.picked { border: 2px solid #777; }
.grid .picked svg { margin: -2px; }
.grid svg { width: 80px; height: 80px; fill: #d0e2fa; stroke: #2b80ee; stroke-width: 1.4; }
.hole { fill: #fff; }
.primary { background: #2d80e2; color: #fff; border-radius: 4px; height: 32px; width: 128px; margin-top: 9px; flex: none; }
.tabs { height: 32px; display: flex; align-items: flex-end; gap: 5px; flex: none; margin-bottom: -1px; position: relative; }
.tabs button { width: 79px; height: 25px; line-height: 22px; background: #dcdcdc; border-radius: 4px 4px 0 0; color: #666; margin-bottom: 1px; }
.tabs .on { width: 82px; height: 32px; background: #fff; border: 1px solid #c6c8cc; border-bottom: 0; color: #2b80ee; margin: 0; }
.panel { flex: 1; min-height: 0; display: flex; flex-direction: column; background: #fff; border: 1px solid #c6c8cc; padding: 13px 7px 0 6px; }
.field { display: flex; align-items: center; height: 26px; flex: none; }
.field label { width: 82px; flex: none; white-space: nowrap; }
.field input { flex: 1; min-width: 0; height: 27px; border: 1px solid #c4c4c4; border-radius: 3px; padding: 0 3px; background: #fff; }
.tablebox { margin-top: 9px; flex: 1; min-height: 0; overflow: hidden; border: 1px solid #c4c4c4; display: flex; align-items: flex-start; }
.data { flex: 1; min-width: 0; border-spacing: 0; table-layout: fixed; }
.k1 { width: 235px; }
.k2 { width: 159px; }
.data th { height: 21px; padding: 0; background: #80bbfb; color: #fff; border-right: 1px solid #69a8ec; border-bottom: 1px solid #69a8ec; line-height: 20px; }
.data td { height: 39px; padding: 0 4px; border-right: 1px solid #d6d6d6; border-bottom: 1px solid #d6d6d6; }
.data tbody tr:nth-child(4n + 1) td { height: 38px; }
.data tbody tr:nth-child(even) { background: #f2f2f2; }
.data .sel { outline: 2px solid #60a4ea; outline-offset: -1px; }
.data .sel td + td { background: #d5e9fe; }
.scroll { width: 17px; padding: 292px 4px 0; }
.scroll span { display: block; height: 19px; width: 10px; border-radius: 5px; background: #c4c4c4; }
.note { height: 36px; line-height: 36px; flex: none; white-space: nowrap; }
.dialog > footer { display: flex; justify-content: flex-end; gap: 9px; margin-top: 8px; padding-right: 6px; flex: none; }
.dialog > footer button { width: 93px; height: 28px; margin: 0; border-radius: 4px; }
.plain { background: #fff; border: 1px solid #ccc; }
.ink { position: absolute; left: -106px; top: -111px; width: 700px; height: 760px; pointer-events: none; }
.ink path { stroke: #ff1e10; stroke-width: 4; stroke-linejoin: round; stroke-linecap: round; }
```
